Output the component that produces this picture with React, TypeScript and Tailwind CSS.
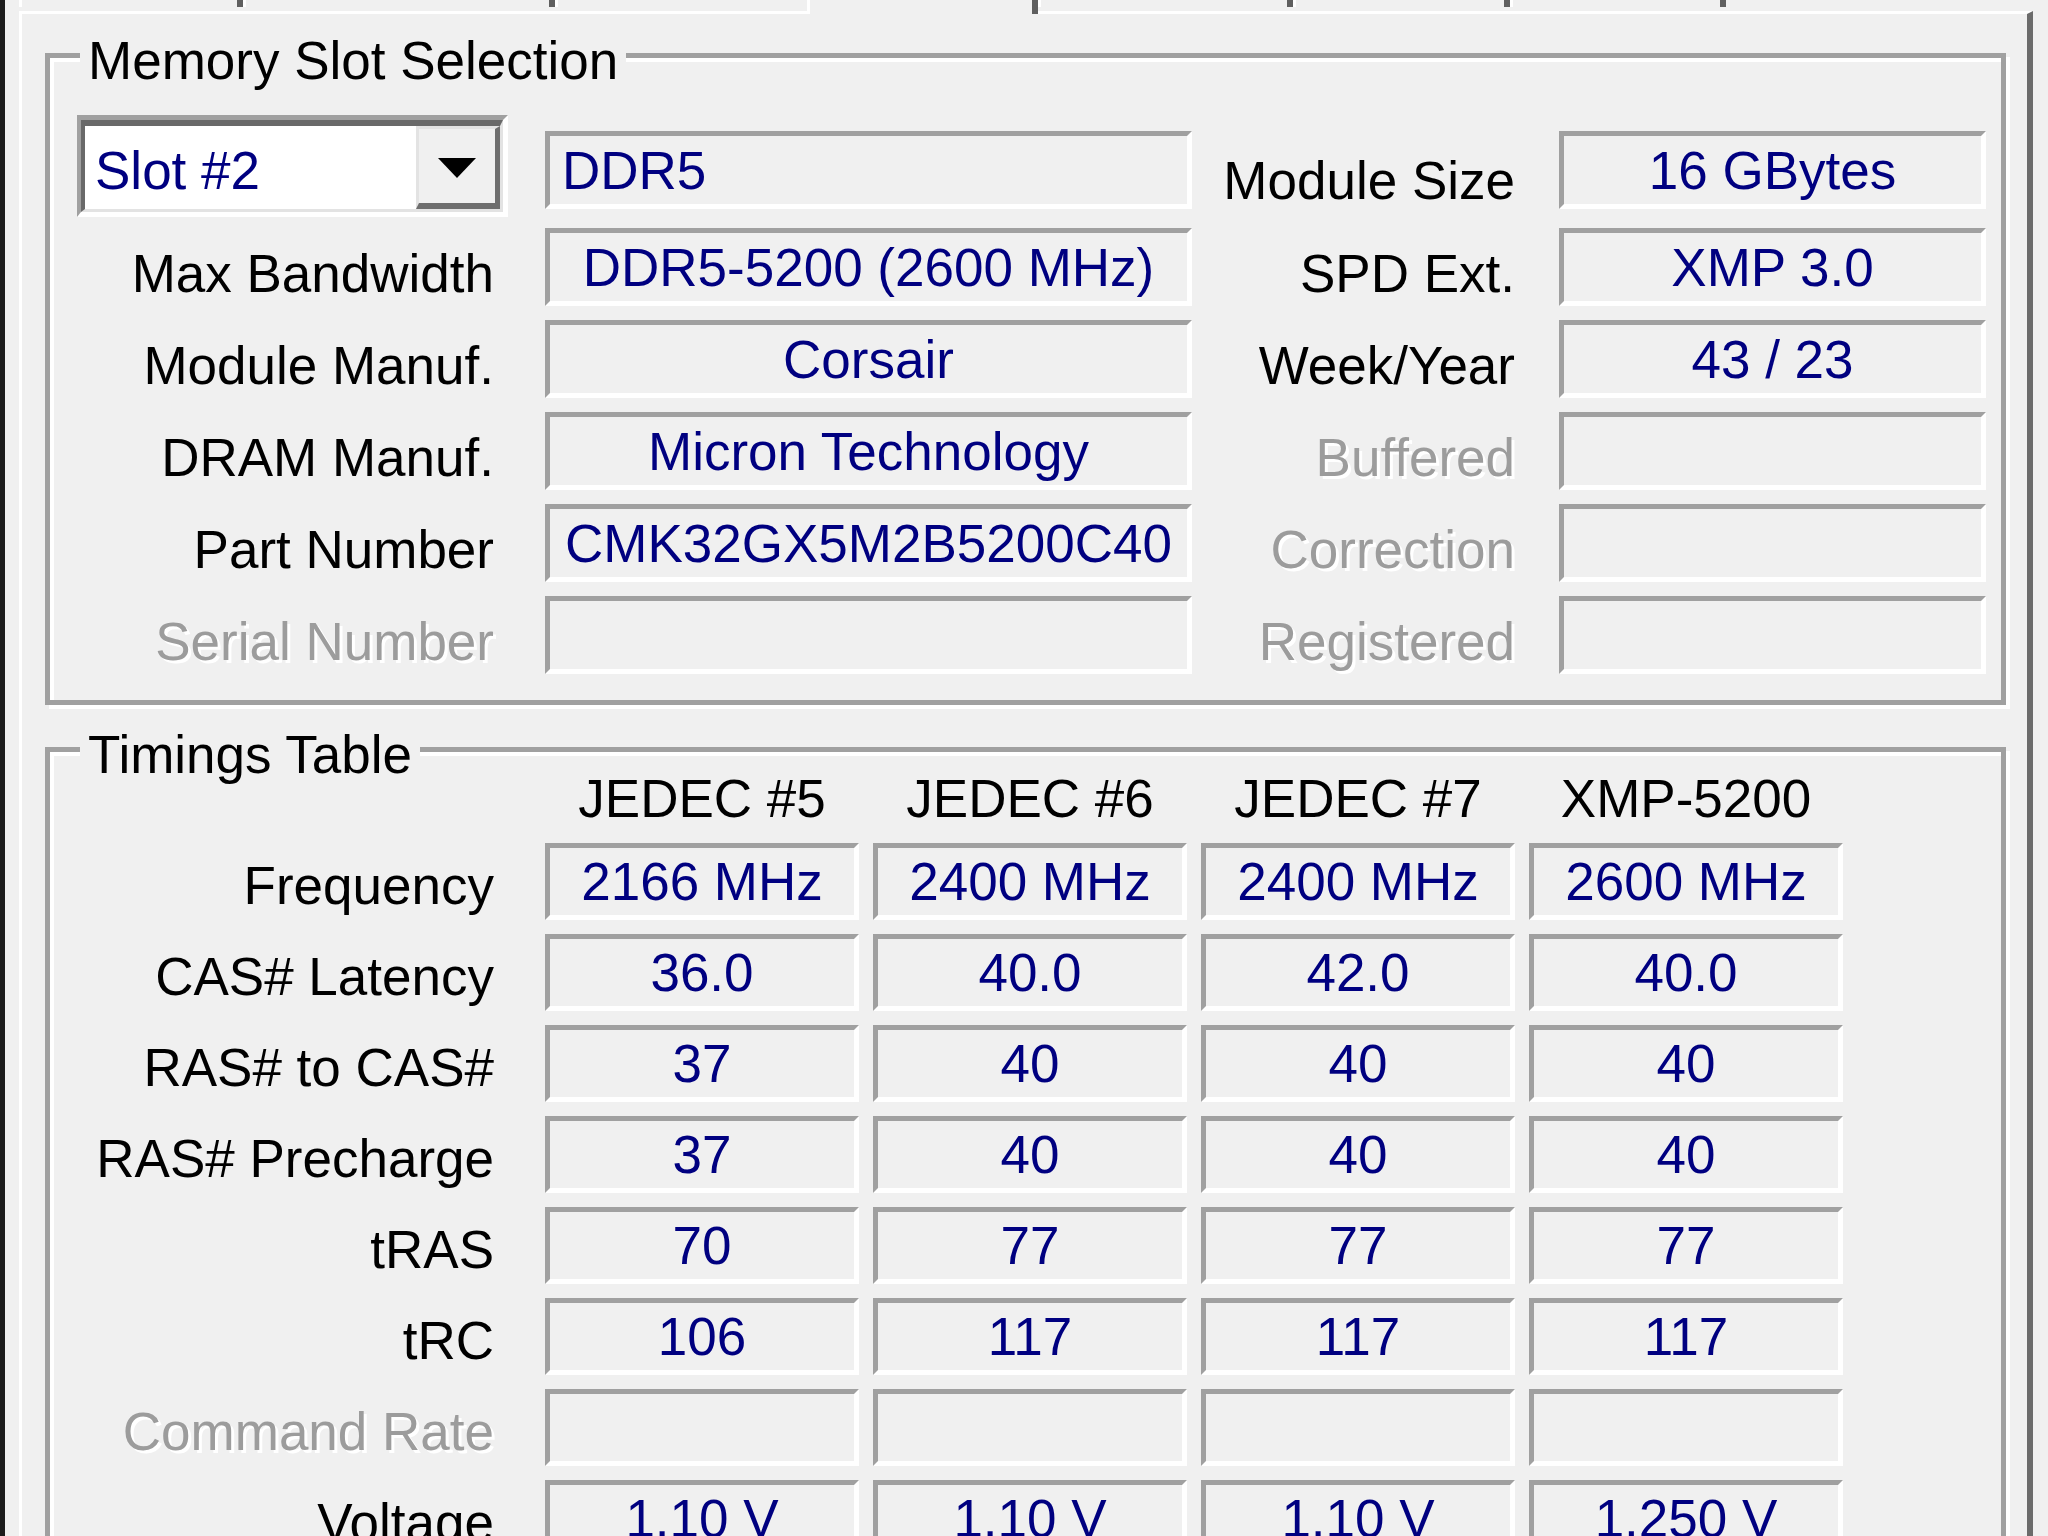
import React from 'react';

interface FieldProps {
  value?: string;
  width: string;
  height?: string;
  alignLeft?: boolean;
  className?: string;
}

const Field: React.FC<FieldProps> = ({ value = '', width, height = 'h-[78px]', alignLeft = false, className = '' }) => (
  <div
    className={`${width} ${height} shrink-0 flex items-center overflow-hidden whitespace-nowrap text-[#000080] border-t-[5px] border-l-[5px] border-b-[5px] border-r-[5px] border-t-[#a0a0a0] border-l-[#a0a0a0] border-b-white border-r-white ${alignLeft ? 'justify-start pl-[12px]' : 'justify-center'} ${className}`}
  >
    {value}
  </div>
);

interface LabelProps {
  text: string;
  width: string;
  disabled?: boolean;
  offset?: string;
}

const Label: React.FC<LabelProps> = ({ text, width, disabled = false, offset = 'pt-[12px]' }) => (
  <div
    className={`${width} ${offset} shrink-0 text-right whitespace-nowrap ${disabled ? 'text-[#9c9c9c] [text-shadow:3px_3px_0_#ffffff]' : 'text-black'}`}
  >
    {text}
  </div>
);

const GroupTitle: React.FC<{ text: string }> = ({ text }) => (
  <span className="absolute -top-[24px] left-[30px] px-[8px] bg-[#f0f0f0] text-black whitespace-nowrap">{text}</span>
);

const ComboBox: React.FC = () => (
  <div className="ml-[17px] w-[431px] h-[102px] shrink-0 flex border-t-[5px] border-l-[4px] border-b-[5px] border-r-[5px] border-t-[#a0a0a0] border-l-[#a0a0a0] border-b-white border-r-white">
    <div className="flex-1 flex bg-white border-t-[6px] border-l-[4px] border-b-[3px] border-r-[3px] border-t-[#696969] border-l-[#696969] border-b-[#e3e3e3] border-r-[#e3e3e3]">
      <div className="flex-1 flex items-center pl-[10px] pt-[6px] text-[#000080]">Slot #2</div>
      <div className="w-[84px] flex items-center justify-center pt-[4px] bg-[#f0f0f0] border-t-[3px] border-l-[3px] border-r-[5px] border-b-[6px] border-t-[#e3e3e3] border-l-[#e3e3e3] border-r-[#6e6e6e] border-b-[#6e6e6e]">
        <svg width="38" height="20" viewBox="0 0 38 20">
          <polygon points="0,0 38,0 19,20" fill="#000000" />
        </svg>
      </div>
    </div>
  </div>
);

const slotRows = [
  { left: 'Max Bandwidth', value: 'DDR5-5200 (2600 MHz)', right: 'SPD Ext.', rightValue: 'XMP 3.0' },
  { left: 'Module Manuf.', value: 'Corsair', right: 'Week/Year', rightValue: '43 / 23' },
  { left: 'DRAM Manuf.', value: 'Micron Technology', right: 'Buffered', rightValue: '', rightDisabled: true },
  { left: 'Part Number', value: 'CMK32GX5M2B5200C40', right: 'Correction', rightValue: '', rightDisabled: true },
  { left: 'Serial Number', value: '', leftDisabled: true, right: 'Registered', rightValue: '', rightDisabled: true },
];

const timingRows = [
  { label: 'Frequency', values: ['2166 MHz', '2400 MHz', '2400 MHz', '2600 MHz'] },
  { label: 'CAS# Latency', values: ['36.0', '40.0', '42.0', '40.0'] },
  { label: 'RAS# to CAS#', values: ['37', '40', '40', '40'] },
  { label: 'RAS# Precharge', values: ['37', '40', '40', '40'] },
  { label: 'tRAS', values: ['70', '77', '77', '77'] },
  { label: 'tRC', values: ['106', '117', '117', '117'] },
  { label: 'Command Rate', values: ['', '', '', ''], disabled: true },
  { label: 'Voltage', values: ['1.10 V', '1.10 V', '1.10 V', '1.250 V'] },
];

const columns = ['JEDEC #5', 'JEDEC #6', 'JEDEC #7', 'XMP-5200'];

const groupBox = 'relative w-[1961px] shrink-0 border-[5px] border-[#a0a0a0] shadow-[inset_4px_4px_0_#ffffff,4px_4px_0_#ffffff] pl-[10px]';

const MemorySlotGroup: React.FC = () => (
  <div className={`${groupBox} h-[652px] pt-[57px]`}>
    <GroupTitle text="Memory Slot Selection" />
    <div className="flex items-center h-[102px]">
      <ComboBox />
      <Field value="DDR5" width="w-[647px]" alignLeft className="ml-[37px] mt-[8px]" />
      <Label text="Module Size" width="w-[323px]" offset="pt-[28px]" />
      <Field value="16 GBytes" width="w-[427px]" className="ml-[44px] mt-[8px]" />
    </div>
    <div className="mt-[11px] flex flex-col gap-[14px]">
      {slotRows.map((row) => (
        <div key={row.left} className="flex items-center h-[78px]">
          <Label text={row.left} width="w-[434px]" disabled={row.leftDisabled} />
          <Field value={row.value} width="w-[647px]" className="ml-[51px]" />
          <Label text={row.right} width="w-[323px]" disabled={row.rightDisabled} />
          <Field value={row.rightValue} width="w-[427px]" className="ml-[44px]" />
        </div>
      ))}
    </div>
  </div>
);

const TimingsGroup: React.FC = () => (
  <div className={`${groupBox} h-[900px] mt-[42px] pt-[20px]`}>
    <GroupTitle text="Timings Table" />
    <div className="flex h-[53px]">
      <div className="w-[485px] shrink-0" />
      <div className="flex gap-[14px]">
        {columns.map((c) => (
          <div key={c} className="w-[314px] text-center whitespace-nowrap">{c}</div>
        ))}
      </div>
    </div>
    <div className="mt-[18px] flex flex-col gap-[14px]">
      {timingRows.map((row) => (
        <div key={row.label} className="flex items-center h-[77px]">
          <Label text={row.label} width="w-[434px]" disabled={row.disabled} offset="pt-[8px]" />
          <div className="ml-[51px] flex gap-[14px]">
            {row.values.map((v, i) => (
              <Field key={i} value={v} width="w-[314px]" height="h-[77px]" />
            ))}
          </div>
        </div>
      ))}
    </div>
  </div>
);

const tabClass = ['w-[224px]', 'w-[312px]', 'w-[252px]'];
const tabClassAfter = ['w-[255px]', 'w-[217px]', 'w-[216px]'];

const TabStrip: React.FC = () => (
  <div className="h-[11px] shrink-0 flex items-start">
    {tabClass.map((w, i) => (
      <div
        key={i}
        className={`${w} h-[7px] border-l-[3px] border-l-white ${i < 2 ? 'border-r-[6px] border-r-[#5f5f5f]' : ''}`}
      />
    ))}
    <div className="relative z-10 w-[231px] h-[14px] bg-[#f0f0f0] border-l-[3px] border-l-white border-r-[6px] border-r-[#5f5f5f]" />
    {tabClassAfter.map((w, i) => (
      <div key={i} className={`${w} h-[7px] border-l-[3px] border-l-white border-r-[6px] border-r-[#5f5f5f]`} />
    ))}
  </div>
);

const App: React.FC = () => {
  return (
    <div className="w-[2048px] h-[1536px] overflow-hidden bg-[#f0f0f0] flex font-['Liberation_Sans',Arial,sans-serif] text-[53px] leading-none text-black">
      <div className="w-[5px] shrink-0 bg-[#1c1c1c]" />
      <div className="w-[2043px] shrink-0 pl-[14px] pr-[15px] flex flex-col">
        <TabStrip />
        <div className="flex-1 flex flex-col border-l-[3px] border-t-[3px] border-l-white border-t-white border-r-[6px] border-r-[#6b6b6b] pl-[23px] pt-[39px]">
          <MemorySlotGroup />
          <TimingsGroup />
        </div>
      </div>
    </div>
  );
};

export default App;
